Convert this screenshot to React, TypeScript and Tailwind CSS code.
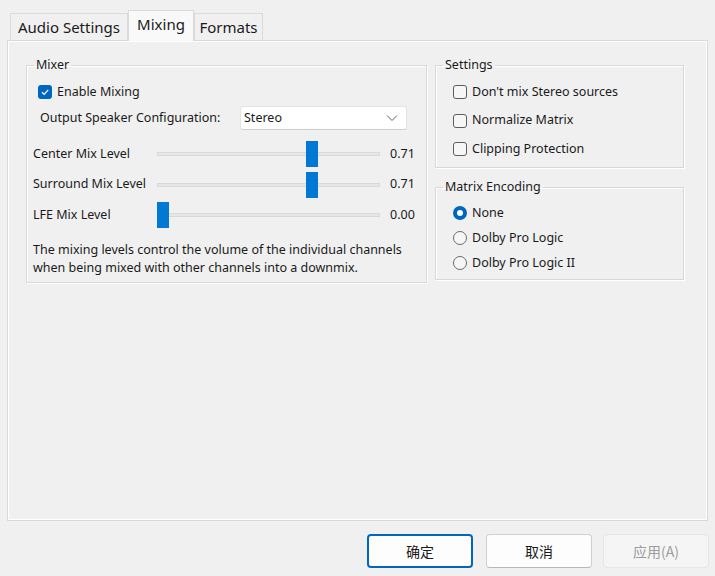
import React from "react";

const font = "font-['Noto_Sans','Noto_Sans_CJK_SC',sans-serif]";

function Check({ checked, label }: { checked?: boolean; label: string }) {
  return (
    <div className="flex items-center gap-[5px] h-[16px]">
      {checked ? (
        <span className="w-[14px] h-[14px] rounded-[3px] bg-[#0067c0] flex items-center justify-center">
          <svg width="10" height="10" viewBox="0 0 10 10">
            <path d="M2 5.2 L4.2 7.3 L8.2 2.8" fill="none" stroke="#fff" strokeWidth="1.2" />
          </svg>
        </span>
      ) : (
        <span className="w-[14px] h-[14px] rounded-[3px] border border-[#5d5d5d] bg-[#f6f6f6]" />
      )}
      <span>{label}</span>
    </div>
  );
}

function Radio({ checked, label }: { checked?: boolean; label: string }) {
  return (
    <div className="flex items-center gap-[5px] h-[16px]">
      {checked ? (
        <span className="w-[14px] h-[14px] rounded-full bg-[#0067c0] flex items-center justify-center">
          <span className="w-[6px] h-[6px] rounded-full bg-white" />
        </span>
      ) : (
        <span className="w-[14px] h-[14px] rounded-full border border-[#6b6b6b] bg-[#f6f6f6]" />
      )}
      <span>{label}</span>
    </div>
  );
}

function Slider({ label, value }: { label: string; value: number }) {
  return (
    <div className="flex items-center h-[30.5px]">
      <span className="w-[124px]">{label}</span>
      <div className="relative w-[223px] h-[26px]">
        <div className="absolute left-0 right-0 top-[11px] h-[4px] bg-[#e7e7e7] border border-[#d9d9d9]" />
        <div
          className="absolute top-0 w-[12px] h-[26px] bg-[#0078d4]"
          style={{ left: `${value * 210}px` }}
        />
      </div>
      <span className="ml-[10px]">{value.toFixed(2)}</span>
    </div>
  );
}

function Group({ title, className, children }: { title: string; className?: string; children: React.ReactNode }) {
  return (
    <fieldset
      className={`border border-[#d8d8d8] shadow-[inset_1px_1px_0_#ffffff,1px_1px_0_#ffffff] ${className ?? ""}`}
    >
      <legend className="ml-[7px] px-[2px] leading-[16px]">{title}</legend>
      {children}
    </fieldset>
  );
}

export default function App() {
  return (
    <div className={`w-[715px] h-[576px] bg-[#f0f0f0] flex flex-col text-[12.5px] text-[#1a1a1a] ${font}`}>
      <div className="flex items-start pl-[10px] pt-[10px] h-[41px] relative z-10">
        <div className="mt-[3px] w-[118px] h-[27px] border border-b-0 border-[#dadada] bg-[#f0f0f0] flex items-center justify-center text-[15px]">
          Audio Settings
        </div>
        <div className="w-[66px] h-[31px] border border-b-0 border-[#dadada] bg-[#f9f9f9] flex items-center justify-center text-[15px] pb-[3px]">
          Mixing
        </div>
        <div className="mt-[3px] w-[69px] h-[27px] border border-b-0 border-[#dadada] bg-[#f0f0f0] flex items-center justify-center text-[15px]">
          Formats
        </div>
      </div>
      <div className="-mt-px mx-[7px] h-[481px] border border-[#d9d9d9] shadow-[inset_1px_1px_0_#ffffff,inset_-1px_-1px_0_#ffffff] flex items-start gap-[8px] pl-[18px] pt-[16px]">
        <Group title="Mixer" className="w-[401px] h-[226px]">
          <div className="pl-[11px] pt-[11px]">
            <Check checked label="Enable Mixing" />
          </div>
          <div className="flex items-center pl-[13px] mt-[6px]">
            <span className="w-[200px]">Output Speaker Configuration:</span>
            <div className="w-[167px] h-[24px] bg-white border border-[#e3e3e3] border-b-[#cfcfcf] rounded-[3px] flex items-center justify-between pl-[3px] pr-[8px]">
              <span>Stereo</span>
              <svg width="12" height="8" viewBox="0 0 12 8">
                <path d="M1 1.5 L6 6.5 L11 1.5" fill="none" stroke="#606060" strokeWidth="1" />
              </svg>
            </div>
          </div>
          <div className="mt-[9px] flex flex-col pl-[6px]">
            <Slider label="Center Mix Level" value={0.71} />
            <Slider label="Surround Mix Level" value={0.71} />
            <Slider label="LFE Mix Level" value={0} />
          </div>
          <p className="mt-[10px] leading-[18px] w-[386px] pl-[6px]">
            The mixing levels control the volume of the individual channels when being mixed with other channels into a downmix.
          </p>
        </Group>
        <div className="flex flex-col gap-[11px]">
          <Group title="Settings" className="w-[249px] h-[111px]">
            <div className="flex flex-col gap-[12.5px] pl-[17px] pt-[11px]">
              <Check label="Don't mix Stereo sources" />
              <Check label="Normalize Matrix" />
              <Check label="Clipping Protection" />
            </div>
          </Group>
          <Group title="Matrix Encoding" className="w-[249px] h-[101px]">
            <div className="flex flex-col gap-[9px] pl-[17px] pt-[10px]">
              <Radio checked label="None" />
              <Radio label="Dolby Pro Logic" />
              <Radio label="Dolby Pro Logic II" />
            </div>
          </Group>
        </div>
      </div>
      <div className={`flex justify-end pr-[6px] pt-[13px] text-[14px] font-['Noto_Sans_CJK_SC',sans-serif]`}>
        <button className="w-[106px] h-[34px] rounded-[4px] bg-[#fdfdfd] border-2 border-[#0067c0] text-[#1a1a1a]">确定</button>
        <button className="ml-[13px] w-[106px] h-[34px] rounded-[4px] bg-[#fdfdfd] border border-[#d0d0d0] border-b-[#b8b8b8] text-[#1a1a1a]">取消</button>
        <button className="ml-[11px] w-[106px] h-[34px] rounded-[4px] bg-[#f5f5f5] border border-[#e5e5e5] text-[#9d9d9d]">应用(A)</button>
      </div>
    </div>
  );
}
